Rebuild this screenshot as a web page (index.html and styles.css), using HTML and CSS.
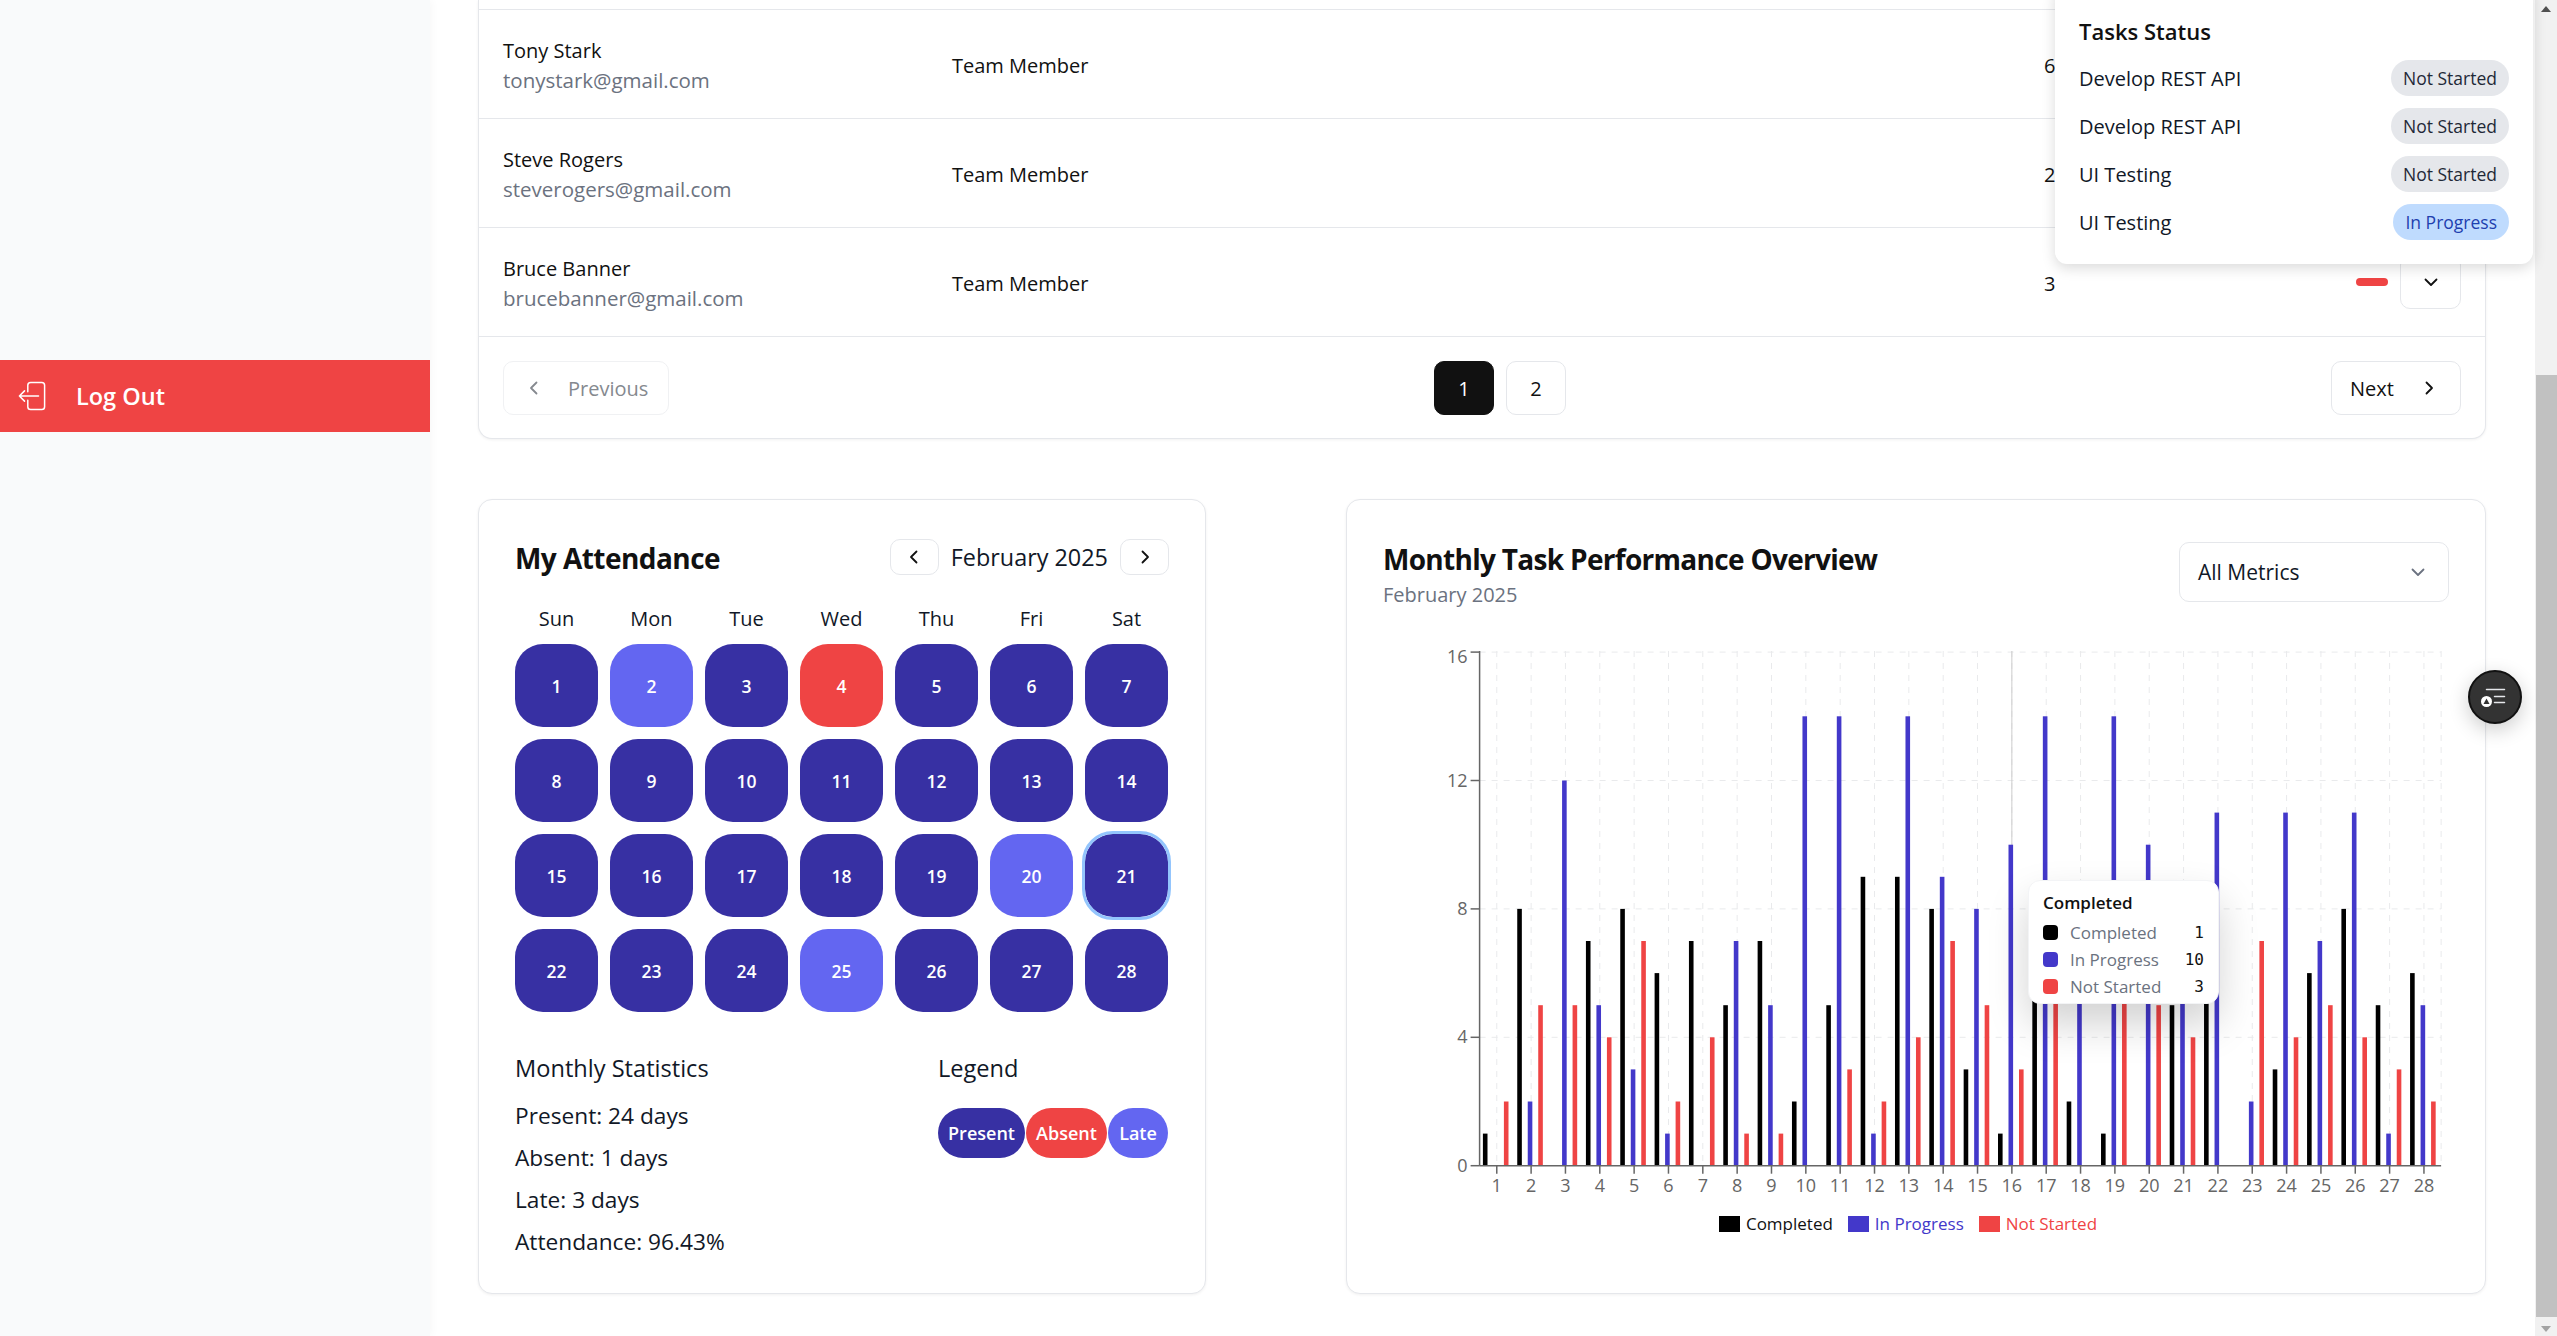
FILE: index.html
```html
<!doctype html>
<html>
<head>
    <meta charset="utf-8">
    <title>Dashboard</title>
    <link rel="stylesheet" href="styles.css">
    <script src="chart.js"></script>
</head>

<body>
<div class="page">
    <aside class="sidebar">
        <a class="logout">
            <svg class="logout-icon" viewBox="0 0 30 32" fill="none" stroke="#fff" stroke-width="1.6" stroke-linecap="round" stroke-linejoin="round">
                <path d="M10.5 11.500V4.500a3 3 0 0 1 3-3h12a3 3 0 0 1 3 3v23a3 3 0 0 1-3 3h-12a3 3 0 0 1-3-3v-7"/>
                <path d="M22 16H1.500M7 10.500 1.500 16 7 21.500"/>
            </svg>
            <span>Log Out</span>
        </a>
    </aside>

    <main class="main">
        <section class="card table-card">
            <div class="row">
                <div class="who"><div class="name">Tony Stark</div><div class="email">tonystark@gmail.com</div></div>
                <div class="role">Team Member</div>
                <div class="count">6</div>
                <div class="status"><span class="dash"></span><button class="toggle"><svg class="chev" viewBox="0 0 16 16"><path d="M2.500 5.500 8 11l5.500-5.500"/></svg></button></div>
            </div>
            <div class="row">
                <div class="who"><div class="name">Steve Rogers</div><div class="email">steverogers@gmail.com</div></div>
                <div class="role">Team Member</div>
                <div class="count">2</div>
                <div class="status"><span class="dash"></span><button class="toggle"><svg class="chev" viewBox="0 0 16 16"><path d="M2.500 5.500 8 11l5.500-5.500"/></svg></button></div>
            </div>
            <div class="row">
                <div class="who"><div class="name">Bruce Banner</div><div class="email">brucebanner@gmail.com</div></div>
                <div class="role">Team Member</div>
                <div class="count">3</div>
                <div class="status"><span class="dash"></span><button class="toggle"><svg class="chev" viewBox="0 0 16 16"><path d="M2.500 5.500 8 11l5.500-5.500"/></svg></button></div>
            </div>
            <div class="pager">
                <button class="pager-btn prev"><svg class="chev" viewBox="0 0 16 16"><path d="M10.500 2.500 5 8l5.500 5.500"/></svg><span>Previous</span></button>
                <div class="pages">
                    <button class="page-num active">1</button>
                    <button class="page-num">2</button>
                </div>
                <button class="pager-btn next"><span>Next</span><svg class="chev" viewBox="0 0 16 16"><path d="M5.500 2.500 11 8l-5.500 5.500"/></svg></button>
            </div>
        </section>

        <div class="bottom">
            <section class="card attendance">
                <div class="att-head">
                    <h2 class="card-title">My Attendance</h2>
                    <div class="month-nav">
                        <button class="month-btn"><svg class="chev" viewBox="0 0 16 16"><path d="M10.500 2.500 5 8l5.500 5.500"/></svg></button>
                        <span class="month-label">February 2025</span>
                        <button class="month-btn"><svg class="chev" viewBox="0 0 16 16"><path d="M5.500 2.500 11 8l-5.500 5.500"/></svg></button>
                    </div>
                </div>
                <div class="weekdays">
                    <span>Sun</span><span>Mon</span><span>Tue</span><span>Wed</span><span>Thu</span><span>Fri</span><span>Sat</span>
                </div>
                <div class="days">
                    <div class="day">1</div><div class="day late">2</div><div class="day">3</div><div class="day absent">4</div><div class="day">5</div><div class="day">6</div><div class="day">7</div>
                    <div class="day">8</div><div class="day">9</div><div class="day">10</div><div class="day">11</div><div class="day">12</div><div class="day">13</div><div class="day">14</div>
                    <div class="day">15</div><div class="day">16</div><div class="day">17</div><div class="day">18</div><div class="day">19</div><div class="day late">20</div><div class="day today">21</div>
                    <div class="day">22</div><div class="day">23</div><div class="day">24</div><div class="day late">25</div><div class="day">26</div><div class="day">27</div><div class="day">28</div>
                </div>
                <div class="att-foot">
                    <div>
                        <h3 class="foot-title">Monthly Statistics</h3>
                        <ul class="stats">
                            <li>Present: 24 days</li>
                            <li>Absent: 1 days</li>
                            <li>Late: 3 days</li>
                            <li>Attendance: 96.43%</li>
                        </ul>
                    </div>
                    <div>
                        <h3 class="foot-title">Legend</h3>
                        <div class="legend-pills">
                            <span class="pill present">Present</span>
                            <span class="pill absent">Absent</span>
                            <span class="pill late">Late</span>
                        </div>
                    </div>
                </div>
            </section>

            <section class="card perf">
                <div class="perf-head">
                    <div>
                        <h2 class="card-title">Monthly Task Performance Overview</h2>
                        <div class="perf-sub">February 2025</div>
                    </div>
                    <div class="select">
                        <span>All Metrics</span>
                        <svg class="chev gray" viewBox="0 0 16 16"><path d="M2.500 5.500 8 11l5.500-5.500"/></svg>
                    </div>
                </div>
                <div class="chart-wrap">
                    <svg id="chart" class="chart" width="1066" height="556"></svg>
                    <div class="tooltip">
                        <div class="tip-title">Completed</div>
                        <div class="tip-row"><i class="swatch s-black"></i><span class="tip-label">Completed</span><span class="tip-val">1</span></div>
                        <div class="tip-row"><i class="swatch s-blue"></i><span class="tip-label">In Progress</span><span class="tip-val">10</span></div>
                        <div class="tip-row"><i class="swatch s-red"></i><span class="tip-label">Not Started</span><span class="tip-val">3</span></div>
                    </div>
                </div>
                <div class="chart-legend">
                    <span class="key"><i class="key-box s-black"></i>Completed</span>
                    <span class="key t-blue"><i class="key-box s-blue"></i>In Progress</span>
                    <span class="key t-red"><i class="key-box s-red"></i>Not Started</span>
                </div>
            </section>
        </div>
    </main>

    <div class="scrollbar">
        <span class="arrow-up"></span>
        <div class="thumb"></div>
        <span class="arrow-down"></span>
    </div>
</div>

<div class="popup">
    <h4 class="popup-title">Tasks Status</h4>
    <div class="popup-row"><span>Develop REST API</span><span class="tag">Not Started</span></div>
    <div class="popup-row"><span>Develop REST API</span><span class="tag">Not Started</span></div>
    <div class="popup-row"><span>UI Testing</span><span class="tag">Not Started</span></div>
    <div class="popup-row"><span>UI Testing</span><span class="tag blue">In Progress</span></div>
</div>

<button class="fab">
    <svg viewBox="0 0 30 30" width="30" height="30" fill="none" stroke="#e5e7eb" stroke-width="1.500" stroke-linecap="round">
        <path d="M6.500 7.500h18M14.500 14.500h10M14.500 20.500h10"/>
        <circle cx="6.500" cy="19.500" r="5.500" fill="#fff" stroke="none"/>
        <path d="M6.500 16.500 9.500 22h-6z" fill="#333" stroke="none"/>
    </svg>
</button>
</body>
</html>
```

FILE: styles.css
```css
*{margin:0; padding:0; box-sizing:border-box;}
html,body{height:100%; overflow:hidden; background:#fff;}
body{font-family:"Open Sans","Noto Sans",sans-serif; font-size:20px; color:#111827;}
ul{list-style:none;}
button{font-family:inherit; background:#fff; cursor:pointer;}

.page{display:flex; height:1336px; position:relative;}

/* sidebar */
.sidebar{width:430px; flex:none; background:#f9fafb; padding-top:360px; box-shadow:2px 0 8px rgba(0,0,0,.03);}
.logout{display:flex; align-items:center; gap:30px; height:72px; padding-left:18px; background:#ef4444; color:#fff; font-size:23.5px; font-weight:600;}
.logout-icon{width:28px; height:32px;}

/* main */
.main{flex:1; min-width:0; padding:0 49px 0 48px;}
.card{background:#fff; border:1px solid #e5e7eb; border-radius:14px; box-shadow:0 1px 3px rgba(0,0,0,.06);}
.table-card{border-top:0; border-top-left-radius:0; border-top-right-radius:0; padding-top:9px;}

.row{display:grid; grid-template-columns:449px 1092px 1fr auto; align-items:center; height:109px; padding:0 24px; border-top:1px solid #e5e7eb;}
.who{padding-top:3px;}
.name{font-size:20px; font-weight:500; line-height:30px; color:#111;}
.email{font-size:20.500px; line-height:29px; color:#6b7280;}
.role,.count{font-size:20px; color:#111; padding-top:3px;}
.status{display:flex; align-items:center; gap:12px;}
.dash{width:32px; height:8px; border-radius:4px; background:#ef4444;}
.toggle{width:61px; height:54px; border:1px solid #e5e7eb; border-radius:10px; display:flex; align-items:center; justify-content:center;}
.chev{width:16px; height:16px; fill:none; stroke:#111; stroke-width:1.800; stroke-linecap:round; stroke-linejoin:round;}
.chev.gray{stroke:#6b7280;}

.pager{display:flex; justify-content:space-between; align-items:center; padding:24px 24px 23px; border-top:1px solid #e5e7eb;}
.pager-btn{height:54px; border:1px solid #e5e7eb; border-radius:10px; display:flex; align-items:center; font-size:20px; color:#111;}
.prev{width:166px; padding-left:22px; gap:26px; color:#85898f; border-color:#f0f1f3;}
.prev .chev{stroke:#85898f;}
.next{width:130px; padding-left:18px; gap:27px;}
.pages{display:flex; gap:12px;}
.page-num{width:60px; height:54px; border:1px solid #e5e7eb; border-radius:10px; font-size:20px; font-weight:500; color:#111;}
.page-num.active{background:#111; border-color:#111; color:#fff;}

.bottom{display:grid; grid-template-columns:728px 1140px; justify-content:space-between; margin-top:60px;}

/* attendance */
.attendance{height:795px; padding:39px 36px 0;}
.att-head{display:flex; justify-content:space-between; align-items:center; height:36px;}
.att-head .card-title{margin-top:2px; letter-spacing:-.55px;}
.card-title{font-size:28px; line-height:36px; font-weight:700; letter-spacing:-.7px; color:#111;}
.month-nav{display:flex; align-items:center; gap:12px;}
.month-btn{width:49px; height:36px; border:1px solid #e5e7eb; border-radius:10px; display:flex; align-items:center; justify-content:center;}
.month-label{font-size:23.400px;}
.weekdays{display:grid; grid-template-columns:repeat(7,83px); gap:12px; margin-top:30px; height:28px; line-height:28px; text-align:center; font-size:20px; font-weight:500;}
.days{display:grid; grid-template-columns:repeat(7,83px); grid-auto-rows:83px; gap:12px; margin-top:11px;}
.day{display:flex; align-items:center; justify-content:center; border-radius:28px; background:#3730a3; color:#fff; font-size:17.500px; font-weight:600;}
.day.late{background:#6366f1;}
.day.absent{background:#ef4444;}
.day.today{outline:3px solid #93c5fd;}
.att-foot{display:grid; grid-template-columns:423px 230px; margin-top:40px;}
.foot-title{font-size:23.600px; line-height:32px; font-weight:500;}
.stats{margin-top:11px;}
.stats li{font-size:22.700px; line-height:42px;}
.legend-pills{display:flex; gap:1px; margin-top:24px;}
.pill{display:flex; align-items:center; justify-content:center; height:50px; border-radius:25px; color:#fff; font-size:18px; font-weight:600;}
.pill.present{width:87px; background:#3730a3;}
.pill.absent{width:81px; background:#ef4444;}
.pill.late{width:60px; background:#6366f1;}

/* chart */
.perf{height:795px; padding:41px 36px 0;}
.perf-head{display:flex; justify-content:space-between; align-items:flex-start;}
.perf-sub{font-size:20px; line-height:28px; color:#6b7280; margin-top:4px;}
.select{width:270px; height:60px; margin-top:1px; padding:0 22px 0 18px; border:1px solid #e5e7eb; border-radius:10px; display:flex; align-items:center; justify-content:space-between; font-size:21px;}
.chart-wrap{position:relative; margin-top:31px; height:556px;}
.chart{display:block;}
.chart text{font-family:"Open Sans",sans-serif; font-size:18px; fill:#666;}
.chart .grid{stroke:#e9eaec; stroke-dasharray:6 6;}
.chart .axis{stroke:#666; stroke-width:1.500;}
.chart .cursor{stroke:#ccc;}

.tooltip{position:absolute; left:645px; top:240px; width:191px; height:124px; padding:10px 14px; background:#fff; border:1px solid #f3f4f6; border-radius:12px; box-shadow:0 20px 40px rgba(0,0,0,.18);}
.tip-title{font-size:17px; line-height:24px; font-weight:600; color:#111; margin-bottom:4px;}
.tip-row{display:flex; align-items:center; height:27px; font-size:17px;}
.swatch{width:15px; height:15px; border-radius:4px; margin-right:12px;}
.tip-label{flex:1; color:#6b7280;}
.tip-val{font-family:"DejaVu Sans Mono",monospace; font-size:16px; color:#111;}
.s-black{background:#000;}
.s-blue{background:#4338ca;}
.s-red{background:#ef4444;}

.chart-legend{display:flex; justify-content:center; gap:15px; margin-top:16px; padding-right:16px; font-size:17px; line-height:24px; color:#111;}
.key{display:flex; align-items:center; gap:6px;}
.key-box{width:21px; height:16px;}
.t-blue{color:#4338ca;}
.t-red{color:#ef4444;}

/* scrollbar */
.scrollbar{width:22px; flex:none; background:#f1f1f1; display:flex; flex-direction:column; align-items:center;}
.arrow-up{margin-top:6px; border:5px solid transparent; border-top:0; border-bottom:6px solid #505050;}
.thumb{width:100%; margin:363px 0 0 1px; height:942px; background:#c1c1c1;}
.arrow-down{margin-top:9px; border:5px solid transparent; border-bottom:0; border-top:6px solid #a3a3a3;}

/* overlays */
.popup{position:absolute; left:2055px; top:-16px; width:478px; height:280px; padding:32px 24px 0; background:#fff; border-radius:12px; box-shadow:0 4px 14px rgba(0,0,0,.15);}
.popup-title{font-size:22px; line-height:30px; font-weight:600; color:#111; margin-bottom:8px;}
.popup-row{display:flex; justify-content:space-between; align-items:center; height:48px; font-size:20px;}
.tag{height:36px; line-height:36px; padding:0 12px; border-radius:18px; background:#e5e7eb; color:#1f2937; font-size:17.500px; font-weight:500;}
.tag.blue{background:#bfdbfe; color:#1e40af;}
.fab{position:absolute; left:2468px; top:670px; width:54px; height:54px; border:2px solid #111; border-radius:50%; background:#333; display:flex; align-items:center; justify-content:center; box-shadow:0 6px 20px rgba(0,0,0,.2);}
```

FILE: chart.js
```js
// completed, in progress, not started for each day of the month
var data = [
	[1,0,2],[8,2,5],[0,12,5],[7,5,4],[8,3,7],[6,1,2],[7,0,4],
	[5,7,1],[7,5,1],[2,14,0],[5,14,3],[9,1,2],[9,14,4],[8,9,7],
	[3,8,5],[1,10,3],[6,14,6],[2,7,0],[1,14,6],[0,10,5],[5,6,4],
	[6,11,0],[0,2,7],[3,11,4],[6,7,5],[8,11,4],[5,1,3],[6,5,2]
];
var colors = ['#000','#4338ca','#ef4444'];

window.onload = function(){
	var left = 96.6, top = 11, base = 525.7, unit = 32.1, band = 34.34;
	var right = left + band * 28;
	var html = '';

	// grid
	for( var v = 4; v <= 16; v += 4 ){
		var gy = base - v * unit;
		html += '<line class="grid" x1="'+left+'" x2="'+right+'" y1="'+gy+'" y2="'+gy+'"/>';
	}
	for( var i = 0; i <= 28; i++ ){
		var gx = i == 28 ? right : left + band * (i + .5);
		html += '<line class="grid" x1="'+gx+'" x2="'+gx+'" y1="'+top+'" y2="'+base+'"/>';
	}

	// hover line on day 16
	var cx = left + band * 15.5;
	html += '<line class="cursor" x1="'+cx+'" x2="'+cx+'" y1="'+top+'" y2="'+base+'"/>';

	// bars
	for( var d = 0; d < data.length; d++ ){
		for( var s = 0; s < 3; s++ ){
			var h = data[d][s] * unit;
			if( !h ) continue;
			var x = left + band * d + 3.3 + s * 10.5;
			html += '<rect x="'+x+'" y="'+(base - h)+'" width="4.600" height="'+h+'" fill="'+colors[s]+'"/>';
		}
	}

	// axes
	html += '<line class="axis" x1="'+left+'" x2="'+left+'" y1="'+top+'" y2="'+base+'"/>';
	html += '<line class="axis" x1="'+left+'" x2="'+right+'" y1="'+base+'" y2="'+base+'"/>';
	for( var v = 0; v <= 16; v += 4 ){
		var ty = base - v * unit;
		// the top label is pushed down so it stays inside the plot
		var ly = v == 16 ? ty + 11 : ty + 6;
		html += '<line class="axis" x1="'+(left - 9)+'" x2="'+left+'" y1="'+ty+'" y2="'+ty+'"/>';
		html += '<text x="'+(left - 12)+'" y="'+ly+'" text-anchor="end">'+v+'</text>';
	}
	for( var i = 0; i < 28; i++ ){
		var tx = left + band * (i + .5);
		html += '<line class="axis" x1="'+tx+'" x2="'+tx+'" y1="'+base+'" y2="'+(base + 8)+'"/>';
		html += '<text x="'+tx+'" y="'+(base + 26)+'" text-anchor="middle">'+(i + 1)+'</text>';
	}

	document.querySelector('#chart').innerHTML = html;
};
```
